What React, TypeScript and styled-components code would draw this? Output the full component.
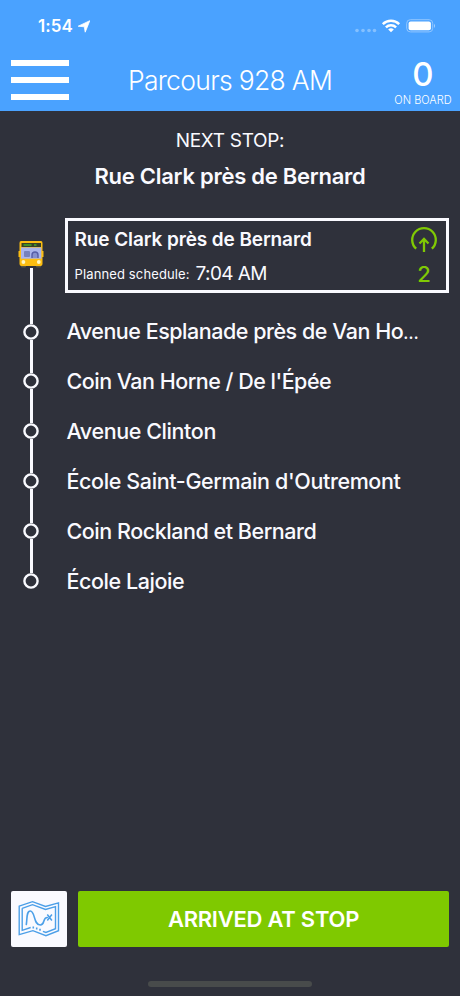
import React from "react";
import styled, { createGlobalStyle } from "styled-components";

const GlobalStyle = createGlobalStyle`
  * { box-sizing: border-box; }
  body { margin: 0; background: #2f313b; font-family: Inter, "Liberation Sans", sans-serif; }
`;

const Screen = styled.main`
  width: 460px;
  height: 996px;
  display: flex;
  flex-direction: column;
  background: #2f313b;
  color: #fafaff;
  overflow: hidden;
`;

const Header = styled.header`
  height: 111px;
  flex: none;
  background: #4aa2ff;
  color: #fff;
`;

const StatusBar = styled.div`
  height: 50px;
  padding: 2px 23px 0 38px;
  display: flex;
  align-items: center;
`;

const Clock = styled.span`
  font-size: 17px;
  font-weight: 600;
  letter-spacing: 0.1px;
  width: 40px;
`;

const StatusIcons = styled.div`
  margin-left: auto;
  display: flex;
  align-items: center;
`;

const NavBar = styled.div`
  height: 60px;
  display: grid;
  grid-template-columns: 130px 200px 130px;
`;

const MenuButton = styled.button`
  appearance: none;
  border: 0;
  padding: 0;
  background: none;
  width: 58px;
  height: 40px;
  margin: 10px 0 0 11px;
  display: flex;
  flex-direction: column;
  justify-content: space-between;
`;

const MenuBar = styled.span`
  height: 6px;
  width: 100%;
  background: #fff;
`;

const Title = styled.h1`
  margin: 14px 0 0;
  font-size: 26.5px;
  line-height: 33px;
  font-weight: 300;
  letter-spacing: -0.7px;
  white-space: nowrap;
  justify-self: center;
`;

const Onboard = styled.div`
  justify-self: end;
  width: 58px;
  margin-right: 8px;
  display: flex;
  flex-direction: column;
  align-items: center;
`;

const OnboardCount = styled.span`
  margin-top: 4px;
  font-size: 33px;
  line-height: 40px;
  font-weight: 500;
`;

const OnboardLabel = styled.span`
  font-size: 11px;
  line-height: 13px;
  font-weight: 300;
  white-space: nowrap;
`;

const NextStop = styled.section`
  height: 107px;
  flex: none;
  text-align: center;
`;

const NextLabel = styled.div`
  padding-top: 17px;
  font-size: 19px;
  line-height: 25px;
  letter-spacing: -0.3px;
`;

const NextName = styled.div`
  margin-top: 9px;
  font-size: 22px;
  line-height: 28px;
  font-weight: 600;
  letter-spacing: -0.26px;
`;

const Route = styled.ol`
  list-style: none;
  margin: 0;
  padding: 0;
  flex: 1;
`;

const StopRow = styled.li<{ $current?: boolean }>`
  height: ${(p) => (p.$current ? 88 : 50)}px;
  display: grid;
  grid-template-columns: 65px 384px;
`;

const Track = styled.div<{ $current?: boolean }>`
  display: flex;
  flex-direction: column;
  align-items: center;
  padding-right: 3px;
  padding-top: ${(p) => (p.$current ? 22 : 0)}px;
`;

const Rail = styled.span<{ $hidden?: boolean }>`
  flex: 1;
  width: 3px;
  background: ${(p) => (p.$hidden ? "transparent" : "#fafaff")};
`;

const StopName = styled.div<{ $tracking: number }>`
  padding-left: 1.5px;
  font-size: 21.5px;
  line-height: 50px;
  font-weight: 500;
  letter-spacing: ${(p) => p.$tracking}px;
  white-space: nowrap;
`;

const Ellipsis = styled.span`
  font-size: 17px;
`;

const Card = styled.div`
  height: 75px;
  border: 3px solid #fafaff;
  display: flex;
  justify-content: space-between;
`;

const CardInfo = styled.div`
  padding: 7px 0 0 6.5px;
`;

const CardName = styled.div`
  font-size: 19px;
  line-height: 24px;
  font-weight: 600;
  letter-spacing: -0.1px;
  white-space: nowrap;
`;

const Schedule = styled.div`
  margin-top: 9px;
  height: 26px;
  display: flex;
  align-items: center;
`;

const ScheduleLabel = styled.span`
  font-size: 13px;
  line-height: 24px;
  width: 121px;
  letter-spacing: 0.13px;
  white-space: nowrap;
`;

const ScheduleTime = styled.span`
  font-size: 19px;
  line-height: 24px;
  letter-spacing: -0.6px;
`;

const Boarding = styled.div`
  width: 44px;
  padding-top: 5px;
  display: flex;
  flex-direction: column;
  align-items: center;
  color: #80c904;
`;

const BoardingCount = styled.span`
  font-size: 22px;
  line-height: 26px;
  font-weight: 500;
  margin-top: 9px;
`;

const Footer = styled.footer`
  padding: 0 11px;
  height: 90px;
  display: flex;
  gap: 11px;
`;

const MapButton = styled.button`
  appearance: none;
  border: 0;
  padding: 0;
  width: 56px;
  height: 56px;
  border-radius: 2px;
  background: #fafaff;
  display: grid;
  place-items: center;
`;

const ArriveButton = styled.button`
  appearance: none;
  border: 0;
  padding: 0;
  flex: 1;
  height: 56px;
  border-radius: 2px;
  background: #7fc900;
  color: #fff;
  font: 600 22px/56px Inter, "Liberation Sans", sans-serif;
  letter-spacing: -0.25px;
`;

const HomeArea = styled.div`
  height: 15px;
  display: flex;
  justify-content: center;
`;

const HomeIndicator = styled.span`
  width: 164px;
  height: 6px;
  border-radius: 3px;
  background: #484b4b;
`;

const LocationArrow = () => (
  <svg width="12" height="13" viewBox="0 0 12 13">
    <path d="M11.8.7 7.2 12.2 6.3 6.8.2 6.2Z" fill="#fff" stroke="#fff" strokeWidth=".8" strokeLinejoin="round" />
  </svg>
);

const StatusGlyphs = () => (
  <svg width="82" height="16" viewBox="0 0 82 16">
    <g fill="#85c0ff">
      <circle cx="2" cy="12.5" r="1.8" />
      <circle cx="8" cy="12.5" r="1.8" />
      <circle cx="14" cy="12.5" r="1.8" />
      <circle cx="19.5" cy="12.5" r="1.8" />
    </g>
    <g fill="none" stroke="#fff" strokeWidth="2.5">
      <path d="M27.8 6.1a12 12 0 0 1 16.4 0" />
      <path d="M30.9 9.4a7.4 7.4 0 0 1 10.2 0" />
    </g>
    <path d="M36 14.3 33.2 11.5a4 4 0 0 1 5.6 0Z" fill="#fff" />
    <rect x="51.7" y="1.7" width="26" height="12.2" rx="3.6" fill="none" stroke="#91c6ff" />
    <rect x="53.6" y="3.5" width="22.3" height="8.7" rx="2" fill="#fff" />
    <path d="M79 5.7q2 2.1 0 4.2Z" fill="#a4d0ff" />
  </svg>
);

const BusIcon = () => (
  <svg width="28" height="28" viewBox="0 0 28 28">
    <rect x="4" y="24" width="5" height="3.4" rx="1" fill="#5a5640" />
    <rect x="19" y="24" width="5" height="3.4" rx="1" fill="#5a5640" />
    <path d="M4 1h20q1.5 0 1.5 2v8h1v6h-1v7q0 2-2 2h-19q-2 0-2-2v-7h-1v-6h1V3q0-2 1.5-2Z" fill="#fcbd11" />
    <rect x="4.5" y="3" width="19.5" height="4" fill="#384128" />
    <path d="M6.5 5h8M17 5h2.5" stroke="#45aa24" strokeWidth="1.7" />
    <rect x="4" y="7.5" width="20.3" height="11.2" fill="#a9b4eb" />
    <rect x="7" y="11" width="6" height="6" rx="1" fill="#7681bb" />
    <path d="M15 18v-3q0-3 3-3t3 3v3" fill="#8590cd" stroke="#555da7" strokeWidth="1.4" />
    <circle cx="6.4" cy="22" r="1.9" fill="#fff6c0" />
    <circle cx="21.8" cy="22" r="1.9" fill="#fff6c0" />
  </svg>
);

const StopDot = () => (
  <svg width="16" height="16" viewBox="0 0 16 16" fill="none" stroke="#fafaff" strokeWidth="2.4">
    <circle cx="8" cy="8" r="6.6" />
  </svg>
);

const BoardIcon = () => (
  <svg width="28" height="26" viewBox="0 0 28 26" fill="none" stroke="currentColor" strokeWidth="2.3">
    <path d="M6.2 22.7a11.8 11.8 0 1 1 15.6 0" />
    <path d="M14 26V13.5M9.5 17.5 14 13l4.5 4.5" />
  </svg>
);

const MapIcon = () => (
  <svg width="42" height="38" viewBox="0 0 42 38" fill="none" stroke="#4c9fe8" strokeWidth="1.4">
    <path d="M1.2 6.2 14.5 1.7l13 4.8 13-3.6v27.8l-12.6 5-13-5L1.2 34.6Z" />
    <path d="M4.2 8.3 14.5 4.7l13 4.8 10-2.8v22l-9.6 3.8-3-1.2M4.2 8.3v22l8.5-2.8" />
    <path d="M8.3 24.5c1-6 0-13.5 4-13.5 5 0 3 14 10 14 5 0 2-7.5 7-7.5" strokeWidth="1.6" strokeLinecap="round" />
    <path d="m29.3 14.5 4.6 6m0-6-4.6 6" strokeWidth="1.5" />
    <path d="M15.3 26.5v2M18.7 27.5v2M22 28.8v2" strokeWidth="1.6" />
  </svg>
);

const stops = [
  { name: "Avenue Esplanade près de Van Ho", tracking: -0.48, truncated: true },
  { name: "Coin Van Horne / De l'Épée", tracking: -0.51 },
  { name: "Avenue Clinton", tracking: -0.41 },
  { name: "École Saint-Germain d'Outremont", tracking: -0.38 },
  { name: "Coin Rockland et Bernard", tracking: -0.46 },
  { name: "École Lajoie", tracking: -0.43 },
];

export default function App() {
  return (
    <Screen>
      <GlobalStyle />
      <Header>
        <StatusBar>
          <Clock>1:54</Clock>
          <LocationArrow />
          <StatusIcons><StatusGlyphs /></StatusIcons>
        </StatusBar>
        <NavBar>
          <MenuButton aria-label="Menu"><MenuBar /><MenuBar /><MenuBar /></MenuButton>
          <Title>Parcours 928 AM</Title>
          <Onboard>
            <OnboardCount>0</OnboardCount>
            <OnboardLabel>ON BOARD</OnboardLabel>
          </Onboard>
        </NavBar>
      </Header>
      <NextStop>
        <NextLabel>NEXT STOP:</NextLabel>
        <NextName>Rue Clark près de Bernard</NextName>
      </NextStop>
      <Route>
        <StopRow $current>
          <Track $current><BusIcon /><Rail /></Track>
          <Card>
            <CardInfo>
              <CardName>Rue Clark près de Bernard</CardName>
              <Schedule>
                <ScheduleLabel>Planned schedule:</ScheduleLabel>
                <ScheduleTime>7:04 AM</ScheduleTime>
              </Schedule>
            </CardInfo>
            <Boarding><BoardIcon /><BoardingCount>2</BoardingCount></Boarding>
          </Card>
        </StopRow>
        {stops.map(({ name, tracking, truncated }, i) => (
          <StopRow key={name}>
            <Track><Rail /><StopDot /><Rail $hidden={i === stops.length - 1} /></Track>
            <StopName $tracking={tracking}>{name}{truncated && <Ellipsis>…</Ellipsis>}</StopName>
          </StopRow>
        ))}
      </Route>
      <Footer>
        <MapButton aria-label="Map"><MapIcon /></MapButton>
        <ArriveButton>ARRIVED AT STOP</ArriveButton>
      </Footer>
      <HomeArea><HomeIndicator /></HomeArea>
    </Screen>
  );
}
